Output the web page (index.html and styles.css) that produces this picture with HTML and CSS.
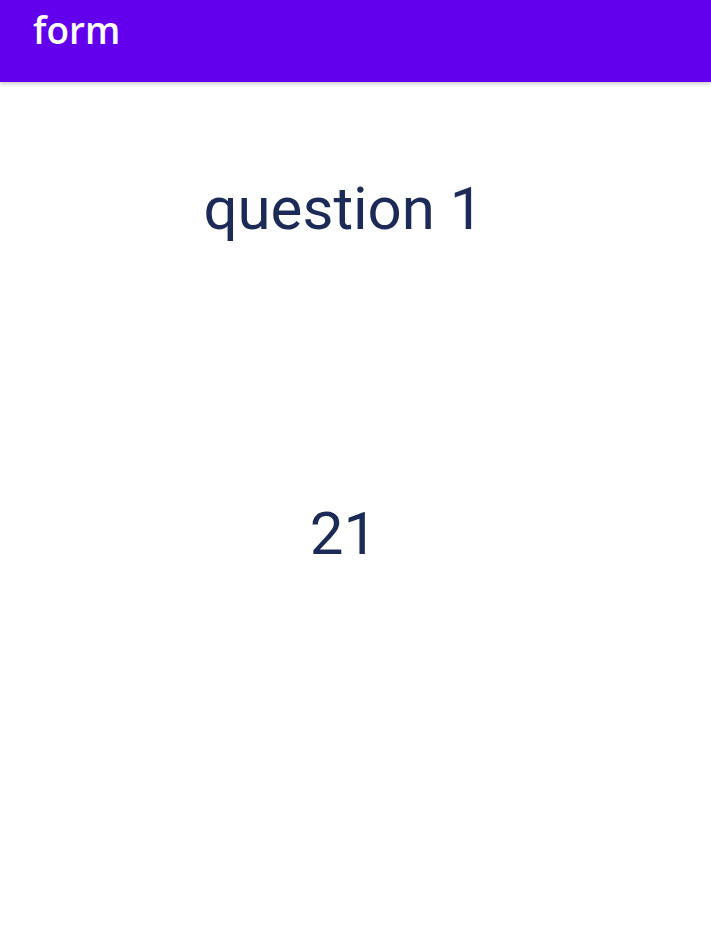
FILE: index.html
```html
<!DOCTYPE html>
<html>
<head>
<meta charset="utf-8">
<link rel="stylesheet" href="styles.css">
</head>
<body>
<header class="appbar"><span class="title">form</span></header>
<main class="content">
  <div class="question">question 1</div>
  <div class="answer">21</div>
</main>
</body>
</html>
```
FILE: styles.css
```css
html, body { margin: 0; padding: 0; background: #fff; }
body { font-family: Roboto, "Noto Sans", sans-serif; }
.appbar {
  height: 82px;
  background: #6200ee;
  box-shadow: 0 2px 4px rgba(0,0,0,0.2);
  display: flex;
  align-items: flex-start;
  padding-left: 33px;
  position: relative;
  z-index: 1;
}
.title {
  color: #fff;
  font-family: "Open Sans", "Noto Sans", sans-serif;
  font-weight: 600;
  font-size: 37px;
  line-height: 60px;
}
.content {
  display: flex;
  flex-direction: column;
  align-items: center;
  padding-right: 24px;
  color: #1b2a57;
  font-size: 60px;
}
.question { margin-top: 97px; line-height: 60px; }
.answer { margin-top: 265px; line-height: 60px; }
```
